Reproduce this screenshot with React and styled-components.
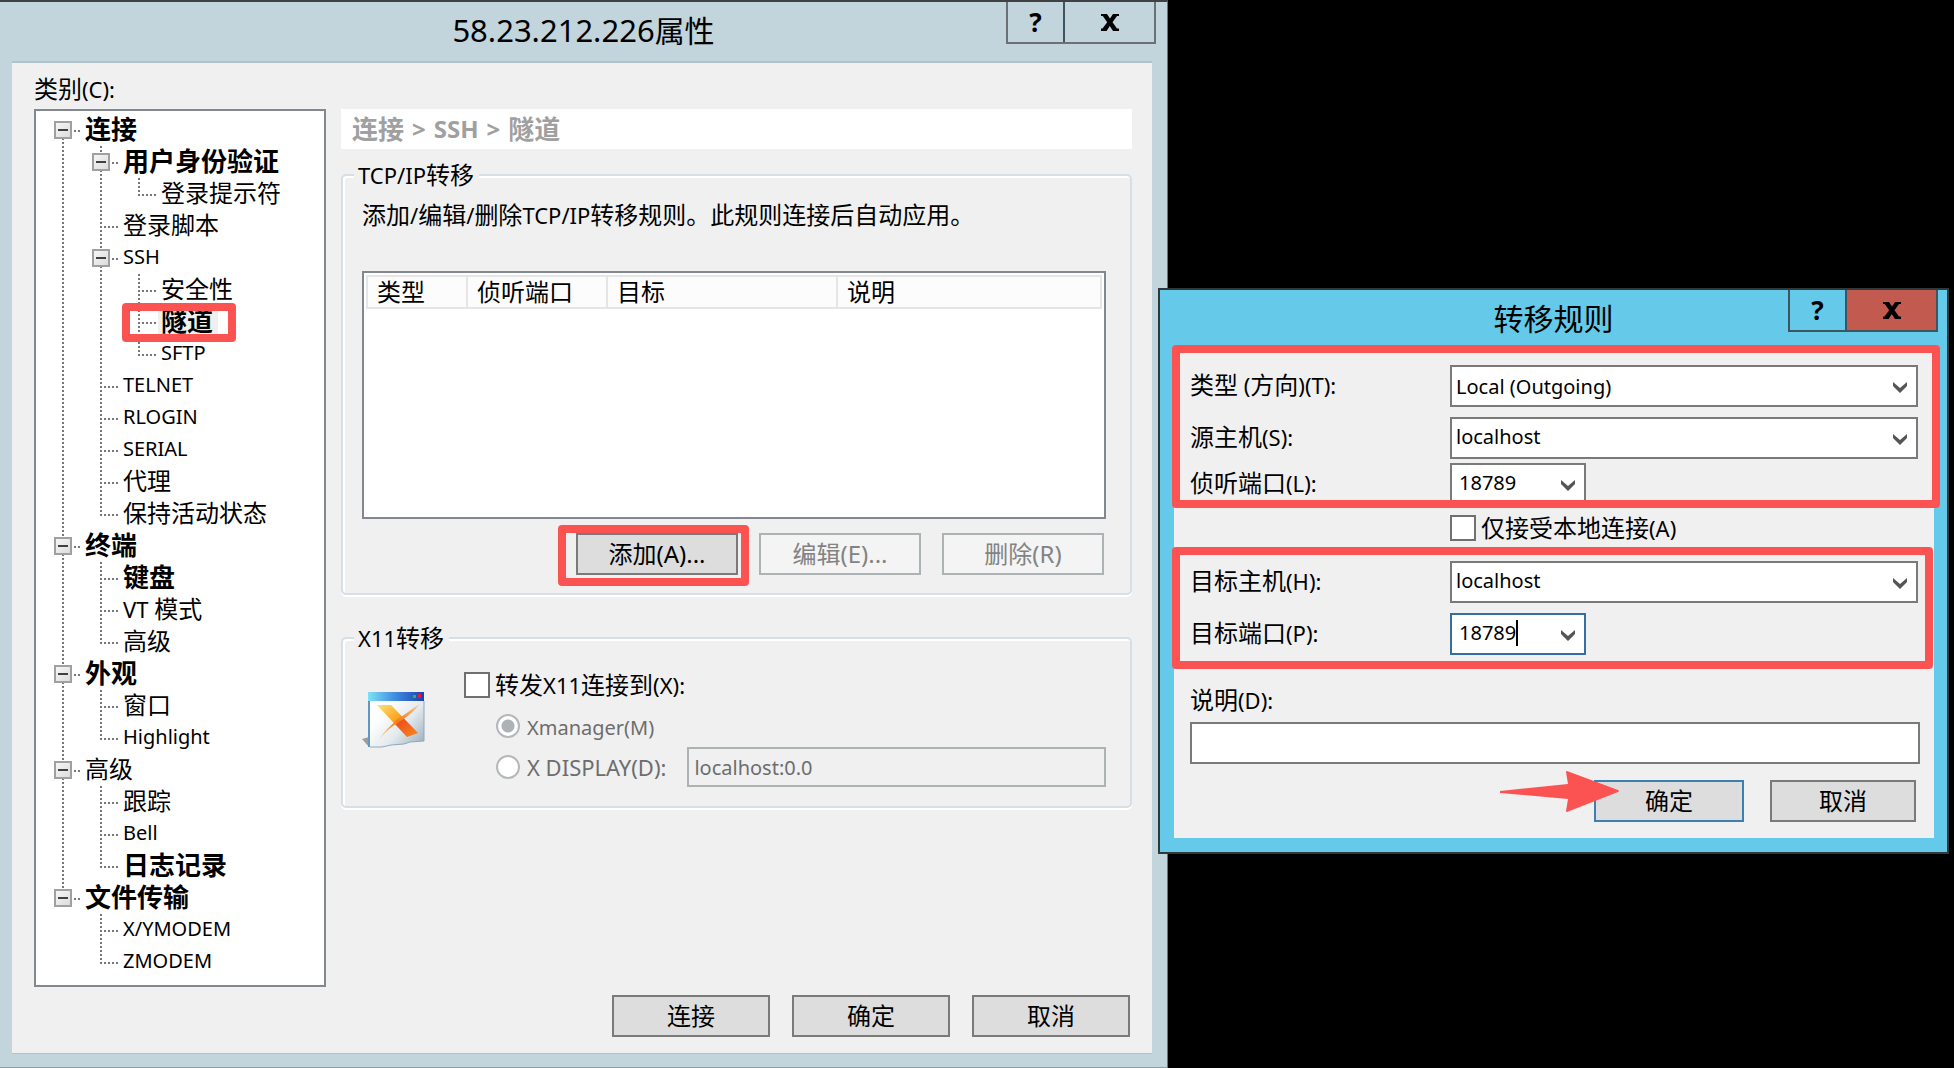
import React from "react";
import styled, { createGlobalStyle, css } from "styled-components";

const GlobalStyle = createGlobalStyle`
  * {
    box-sizing: border-box;
  }
  body {
    margin: 0;
    background: #000;
    color: #000;
    font-family: "Noto Sans", "Noto Sans CJK SC", sans-serif;
    font-size: 24px;
    line-height: 32px;
  }
  button,
  input,
  select {
    font-family: inherit;
    color: inherit;
    margin: 0;
    border-radius: 0;
  }
`;

const Desktop = styled.main`
  display: flex;
  align-items: flex-start;
  min-height: 100vh;
  padding-right: 5px;
`;

/* ---------- window frame ---------- */

const PropertiesWindow = styled.section`
  display: flex;
  flex-direction: column;
  flex: 1167 1 0;
  min-width: 0;
  min-height: 100vh;
  background: #c2d4dc;
  border-top: 2px solid #3f4144;
  border-right: 1px solid #66757c;
  border-bottom: 1px solid #8d9ea6;
`;

const RuleWindow = styled.section`
  flex: 787 1 0;
  min-width: 0;
  margin: 288px 0 0 -10px;
  z-index: 1;
  background: #65c9ea;
  border: 2px solid #30383c;
`;

const TitleBar = styled.header`
  display: grid;
  grid-template-columns: 1fr auto 1fr;
  align-items: center;
  height: 58px;
`;

const Title = styled.h1`
  grid-column: 2;
  margin: 0;
  font-size: 30px;
  font-weight: 400;
`;

const TitleButtons = styled.div`
  display: flex;
  justify-self: end;
  align-self: start;
  margin-right: ${(p) => p.$right}px;
  border: 2px solid ${(p) => p.$line};
  border-top: none;
`;

const TitleButton = styled.button`
  display: flex;
  align-items: center;
  justify-content: center;
  width: ${(p) => (p.$wide ? 91 : 55)}px;
  height: 40px;
  padding: 0;
  border: none;
  background: ${(p) => p.$bg || "transparent"};
  font-size: 26px;
  font-weight: 700;

  & + & {
    border-left: 2px solid ${(p) => p.$line};
  }
`;

const Client = styled.div`
  display: flex;
  flex-direction: column;
  flex: 1;
  margin: 1px 15px 13px 12px;
  padding: 10px 20px 16px 22px;
  background: #f0f0f0;
  border-top: 2px solid #b3c1c8;
  border-bottom: 1px solid #b3c1c8;
`;

const RuleClient = styled.form`
  display: flex;
  flex-direction: column;
  margin: 1px 13px 14px 14px;
  padding: 16px 14px 16px 16px;
  background: #f0f0f0;
`;

/* ---------- shared controls ---------- */

const Latin = styled.span`
  font-size: ${(p) => p.$size}px;
  line-height: 1;
`;

const Button = styled.button`
  width: ${(p) => p.$width}px;
  height: 42px;
  padding: 0;
  border: 2px solid ${(p) => (p.$primary ? "#3c7fb1" : "#7a7a7a")};
  background: #dddddd;
  font-size: 24px;
  line-height: 32px;

  &:disabled {
    border-color: #adb2b5;
    background: #f4f4f4;
    color: #838383;
  }
`;

const ButtonRow = styled.div`
  display: flex;
  justify-content: flex-end;
  gap: ${(p) => p.$gap}px;
  margin-top: ${(p) => p.$top}px;
  padding-right: ${(p) => p.$right}px;
`;

const frame = css`
  position: relative;

  &::after {
    content: "";
    position: absolute;
    inset: ${(p) => p.$inset};
    border: 8px solid #fb5352;
    border-radius: 4px;
    pointer-events: none;
    z-index: 1;
  }
`;

const Framed = styled.div`
  ${frame}
`;

const CheckLabel = styled.label`
  display: flex;
  align-items: center;
  gap: 5px;
  height: ${(p) => p.$height}px;
  white-space: nowrap;
`;

const CheckBox = styled.input`
  appearance: none;
  width: 26px;
  height: 26px;
  border: 2px solid #707070;
  background: #fff;
`;

const TextBox = styled.input`
  flex: 1 1 auto;
  min-width: 0;
  width: 100%;
  height: ${(p) => p.$height}px;
  padding: 0 5px;
  border: 2px solid #7a7a7a;
  background: #fff;
  font-size: 20px;

  &:disabled {
    border-color: #adb2b5;
    background: #f0f0f0;
    color: #6d6d6d;
  }
`;

/* ---------- category tree ---------- */

const TreeLabel = styled.div`
  margin-bottom: 4px;
`;

const Body = styled.div`
  display: flex;
  align-items: stretch;
  gap: 15px;
`;

const TreeBox = styled.ul`
  flex: none;
  width: 292px;
  margin: 0;
  padding: 3px 0 7px 8px;
  border: 2px solid #828790;
  background: #fff;
  list-style: none;
`;

const TreeRow = styled.li`
  display: flex;
  height: 32px;
`;

const dotsV = "repeating-linear-gradient(#777 0 2px, #fff 2px 4px)";
const dotsH = "repeating-linear-gradient(90deg, #777 0 2px, #fff 2px 4px)";

const Guide = styled.span`
  display: flex;
  align-items: center;
  justify-content: center;
  flex: none;
  width: 38px;
  background-repeat: no-repeat;
  background-image: ${(p) =>
    [p.$up && dotsV, p.$down && dotsV, p.$across && dotsH]
      .filter(Boolean)
      .join(", ") || "none"};
  background-size: ${(p) =>
    [p.$up && "2px 16px", p.$down && "2px 16px", p.$across && "18px 2px"]
      .filter(Boolean)
      .join(", ") || "auto"};
  background-position: ${(p) =>
    [p.$up && "18px 0", p.$down && "18px 16px", p.$across && "18px 16px"]
      .filter(Boolean)
      .join(", ") || "0 0"};
`;

const Expander = styled.button`
  display: flex;
  align-items: center;
  justify-content: center;
  width: 18px;
  height: 18px;
  padding: 0;
  border: 2px solid #a0a0a0;
  background: linear-gradient(135deg, #f6f6f6, #dcdcdc);

  &::before {
    content: "";
    width: 10px;
    height: 2px;
    background: #404040;
  }
`;

const NodeText = styled.span`
  padding: 0 5px 0 3px;
  white-space: nowrap;
  font-size: ${(p) => (p.$bold ? 26 : p.$ascii ? 20 : 24)}px;
  font-weight: ${(p) => (p.$bold ? 700 : 400)};
  line-height: 30px;
  background: ${(p) => (p.$inset ? "#f0f0f0" : "transparent")};
  ${(p) => p.$inset && frame}
`;

/* ---------- tunneling panel ---------- */

const Panel = styled.div`
  flex: 1;
  min-width: 0;
`;

const Breadcrumb = styled.nav`
  display: flex;
  align-items: center;
  gap: 8px;
  height: 40px;
  margin-bottom: 10px;
  padding-left: 11px;
  background: #fff;
  color: #a0a0a0;
  font-size: 26px;
  font-weight: 700;
`;

const Group = styled.fieldset`
  min-width: 0;
  margin: 0 0 27px;
  padding: 0 11px;
  border: 2px solid #d5dfe5;
  border-radius: 5px;
  box-shadow: inset 2px 2px 0 #fff, 0 2px 0 #fff;
`;

const Legend = styled.legend`
  padding: 0 5px 0 4px;
  background: #f0f0f0;
`;

const ForwardBody = styled.div`
  padding: 8px 13px 18px 8px;
`;

const Description = styled.p`
  margin: 0 0 40px;
`;

const TableBox = styled.div`
  height: 248px;
  padding: 2px;
  border: 2px solid #828790;
  background: #fff;
`;

const RuleTable = styled.table`
  width: 100%;
  table-layout: fixed;
  border-collapse: collapse;
`;

const HeadCell = styled.th`
  width: ${(p) => p.$width};
  height: 32px;
  padding: 0 0 0 9px;
  border: 2px solid #e5e5e5;
  background: #fcfcfc;
  font-weight: 400;
  line-height: 30px;
  text-align: left;
`;

const X11Body = styled.div`
  display: flex;
  gap: 39px;
  padding: 15px 13px 19px 8px;
`;

const X11Options = styled.div`
  flex: 1;
  min-width: 0;
`;

const RadioRow = styled.div`
  display: flex;
  align-items: center;
  gap: 7px;
  height: ${(p) => p.$height}px;
  margin-top: ${(p) => p.$top}px;
  padding-left: 32px;
  color: #6d6d6d;
  white-space: nowrap;
`;

const Radio = styled.input`
  appearance: none;
  flex: none;
  width: 24px;
  height: 24px;
  border: 2px solid #b4b8ba;
  && {
    border-radius: 50%;
  }
  background: #fff;

  &:checked {
    background: radial-gradient(circle, #adb2b5 0 6px, #fff 7px);
  }
`;

const DisplayLabel = styled.label`
  margin-right: 14px;
`;

/* ---------- forwarding rule form ---------- */

const FormRow = styled.div`
  display: grid;
  grid-template-columns: 260px 1fr;
  align-items: center;
  margin-top: ${(p) => p.$top || 0}px;
  padding-right: 2px;
`;

const FieldLabel = styled.label`
  padding-bottom: 2px;
`;

const ComboBox = styled.div`
  display: grid;
  grid-template-columns: 1fr 32px;
  align-items: center;
  width: ${(p) => (p.$short ? "136px" : "100%")};
  height: 42px;
  border: 2px solid ${(p) => (p.$active ? "#356f9f" : "#7a7a7a")};
  background: #fff;
`;

const ComboSelect = styled.select`
  grid-area: 1 / 1 / 2 / 3;
  appearance: none;
  height: 38px;
  padding: 0 4px;
  border: none;
  background: transparent;
  font-size: 20px;
`;

const ComboField = styled.div`
  display: flex;
  align-items: center;
  grid-area: 1 / 1;
  padding: 0 0 3px ${(p) => (p.$short ? 7 : 4)}px;
`;

const ComboInput = styled.input`
  field-sizing: content;
  padding: 0;
  border: none;
  outline: none;
  background: transparent;
  font-size: 20px;
`;

const Caret = styled.span`
  width: 2px;
  height: 26px;
  background: #000;
`;

const Chevron = styled.svg`
  grid-area: 1 / 2;
  justify-self: center;
  margin-top: 2px;
  pointer-events: none;
`;

const CheckRow = styled.div`
  margin: 10px 0 20px 260px;
`;

const NoteLabel = styled.label`
  margin: 29px 0 6px;
`;

const Pointed = styled.span`
  position: relative;
`;

const Arrow = styled.svg`
  position: absolute;
  left: -94px;
  top: -9px;
  pointer-events: none;
`;

const isAscii = (text) => /^[\x20-\x7e]+$/.test(text);

// The ASCII runs are set smaller than the Chinese text around them.
const Mixed = ({ text, latin = 22 }) =>
  text
    .split(/([\x20-\x7e]+)/)
    .filter(Boolean)
    .map((part, i) =>
      isAscii(part) ? (
        <Latin key={i} $size={latin}>
          {part}
        </Latin>
      ) : (
        part
      )
    );

const CloseIcon = () => (
  <svg width="18" height="17" viewBox="0 0 18 17" aria-hidden="true">
    <path
      d="M0 0h6l3 4.500 3-4.500h6v2h-2l-4.500 6.300 4.500 6.200h2v2.500h-6l-3.200-5-3.200 5H0V14.500h1.500L6.200 8.300 1.800 2H0z"
      fill="#000"
    />
  </svg>
);

const XIcon = () => (
  <svg width="64" height="58" viewBox="0 0 64 58" aria-hidden="true">
    <defs>
      <linearGradient id="bar" x1="0" x2="1">
        <stop offset="0" stopColor="#7fe0f8" />
        <stop offset="0.500" stopColor="#3d8ade" />
        <stop offset="1" stopColor="#1f3fae" />
      </linearGradient>
      <linearGradient id="page" x1="0.300" y1="0.300" x2="1" y2="0.900">
        <stop offset="0" stopColor="#ffffff" />
        <stop offset="0.500" stopColor="#e3e9ed" />
        <stop offset="1" stopColor="#9fb2bf" />
      </linearGradient>
      <linearGradient id="stroke" x1="0" y1="0" x2="1" y2="1">
        <stop offset="0" stopColor="#ffe07a" />
        <stop offset="0.450" stopColor="#fba51c" />
        <stop offset="0.550" stopColor="#f0521a" />
        <stop offset="1" stopColor="#f98a1c" />
      </linearGradient>
      <linearGradient id="slash" x1="1" y1="0" x2="0" y2="1">
        <stop offset="0" stopColor="#fbc98a" />
        <stop offset="0.500" stopColor="#f47a1a" />
        <stop offset="1" stopColor="#fbd9a0" />
      </linearGradient>
    </defs>
    <path d="M0 48l7-2v10z" fill="#9a9da0" />
    <path d="M6 1h56v49l-14 1-6 2-13 1-9 2-13 1z" fill="url(#page)" />
    <path d="M6 1h2v55H6z" fill="#5f96c4" />
    <path d="M62 10v40l-14 1-6 2-13 1-9 2-12 0" fill="none" stroke="#8ea9ba" />
    <path d="M6 1h56v9H6z" fill="url(#bar)" />
    <path d="M51 4h3v3h-3z" fill="#1fbf4f" />
    <path d="M56 3h3v4h-3z" fill="#e0203a" />
    <path d="M15 14h14l27 28-11 4z" fill="url(#stroke)" />
    <path d="M58 13C40 25 27 33 16 50c7-9 13-14 21-19s14-10 21-18z" fill="url(#slash)" />
  </svg>
);

const WindowTitle = ({ title, line, closeBg, right }) => (
  <TitleBar>
    <Title>
      <Mixed text={title} latin={31} />
    </Title>
    <TitleButtons $line={line} $right={right}>
      <TitleButton type="button" $line={line}>
        ?
      </TitleButton>
      <TitleButton type="button" $wide $line={line} $bg={closeBg} aria-label="Close">
        <CloseIcon />
      </TitleButton>
    </TitleButtons>
  </TitleBar>
);

const tree = [
  {
    name: "连接",
    bold: true,
    children: [
      { name: "用户身份验证", bold: true, children: [{ name: "登录提示符" }] },
      { name: "登录脚本" },
      {
        name: "SSH",
        children: [
          { name: "安全性" },
          { name: "隧道", bold: true, selected: true },
          { name: "SFTP" },
        ],
      },
      { name: "TELNET" },
      { name: "RLOGIN" },
      { name: "SERIAL" },
      { name: "代理" },
      { name: "保持活动状态" },
    ],
  },
  {
    name: "终端",
    bold: true,
    children: [{ name: "键盘", bold: true }, { name: "VT 模式" }, { name: "高级" }],
  },
  {
    name: "外观",
    bold: true,
    children: [{ name: "窗口" }, { name: "Highlight" }],
  },
  {
    name: "高级",
    children: [{ name: "跟踪" }, { name: "Bell" }, { name: "日志记录", bold: true }],
  },
  {
    name: "文件传输",
    bold: true,
    children: [{ name: "X/YMODEM" }, { name: "ZMODEM" }],
  },
];

// Flattens the tree; "lines" tells for each ancestor whether its line goes on.
const flatten = (nodes, lines = []) =>
  nodes.flatMap((node, i) => {
    const last = i === nodes.length - 1;
    const first = i === 0 && lines.length === 0;
    return [
      { ...node, lines, last, first },
      ...flatten(node.children || [], [...lines, !last]),
    ];
  });

const CategoryTree = () => (
  <TreeBox aria-labelledby="category">
    {flatten(tree).map((node, i) => (
      <TreeRow key={i}>
        {node.lines.map((on, j) => (
          <Guide key={j} $up={on} $down={on} />
        ))}
        <Guide $up={!node.first} $down={!node.last} $across>
          {node.children && <Expander type="button" aria-label={node.name} />}
        </Guide>
        <NodeText
          $bold={node.bold}
          $ascii={isAscii(node.name)}
          $inset={node.selected && "-3px -18px -4px -36px"}
        >
          {isAscii(node.name) ? node.name : <Mixed text={node.name} />}
        </NodeText>
      </TreeRow>
    ))}
  </TreeBox>
);

const Combo = ({ id, value, options, short, active }) => (
  <ComboBox $short={short} $active={active}>
    {options ? (
      <ComboSelect id={id} defaultValue={value}>
        {options.map((o) => (
          <option key={o}>{o}</option>
        ))}
      </ComboSelect>
    ) : (
      <ComboField $short={short}>
        <ComboInput id={id} defaultValue={value} />
        {active && <Caret />}
      </ComboField>
    )}
    <Chevron width="16" height="13" viewBox="0 0 16 13" aria-hidden="true">
      <path d="M1 1v4l7 7 7-7V1L8 7z" fill="#555" />
    </Chevron>
  </ComboBox>
);

const Field = ({ label, top, ...combo }) => (
  <FormRow $top={top}>
    <FieldLabel htmlFor={combo.id}>
      <Mixed text={label} />
    </FieldLabel>
    <Combo {...combo} />
  </FormRow>
);

const Properties = () => (
  <PropertiesWindow>
    <WindowTitle title="58.23.212.226属性" line="#6b7076" right={11} />
    <Client>
      <TreeLabel id="category">
        <Mixed text="类别(C):" />
      </TreeLabel>
      <Body>
        <CategoryTree />
        <Panel>
          <Breadcrumb>
            <span>连接</span>
            <Latin $size={24}>&gt;</Latin>
            <Latin $size={24}>SSH</Latin>
            <Latin $size={24}>&gt;</Latin>
            <span>隧道</span>
          </Breadcrumb>
          <Group>
            <Legend>
              <Mixed text="TCP/IP转移" />
            </Legend>
            <ForwardBody>
              <Description>
                <Mixed text="添加/编辑/删除TCP/IP转移规则。此规则连接后自动应用。" />
              </Description>
              <TableBox>
                <RuleTable>
                  <thead>
                    <tr>
                      <HeadCell $width="100px">类型</HeadCell>
                      <HeadCell $width="140px">侦听端口</HeadCell>
                      <HeadCell $width="230px">目标</HeadCell>
                      <HeadCell $width="auto">说明</HeadCell>
                    </tr>
                  </thead>
                </RuleTable>
              </TableBox>
              <ButtonRow $gap={21} $top={14} $right={2}>
                <Framed $inset="-8px -11px -11px -18px">
                  <Button type="button" $width={162}>
                    <Mixed text="添加(A)..." latin={24} />
                  </Button>
                </Framed>
                <Button type="button" $width={162} disabled>
                  <Mixed text="编辑(E)..." latin={24} />
                </Button>
                <Button type="button" $width={162} disabled>
                  <Mixed text="删除(R)" latin={24} />
                </Button>
              </ButtonRow>
            </ForwardBody>
          </Group>
          <Group>
            <Legend>
              <Mixed text="X11转移" />
            </Legend>
            <X11Body>
              <svg width="63" height="80" viewBox="0 0 63 80" aria-hidden="true">
                <g transform="translate(0 22)">
                  <XIcon />
                </g>
              </svg>
              <X11Options>
                <CheckLabel $height={32}>
                  <CheckBox type="checkbox" />
                  <span>
                    <Mixed text="转发X11连接到(X):" />
                  </span>
                </CheckLabel>
                <RadioRow $height={32} $top={9}>
                  <Radio type="radio" name="x11" id="xmanager" defaultChecked disabled />
                  <label htmlFor="xmanager">
                    <Mixed text="Xmanager(M)" latin={20} />
                  </label>
                </RadioRow>
                <RadioRow $height={40} $top={5}>
                  <Radio type="radio" name="x11" id="xdisplay" disabled />
                  <DisplayLabel htmlFor="xdisplay">
                    <Mixed text="X DISPLAY(D):" />
                  </DisplayLabel>
                  <TextBox
                    aria-label="X DISPLAY"
                    defaultValue="localhost:0.0"
                    $height={40}
                    disabled
                  />
                </RadioRow>
              </X11Options>
            </X11Body>
          </Group>
        </Panel>
      </Body>
      <ButtonRow $gap={22} $top={8} $right={2}>
        <Button type="button" $width={158}>连接</Button>
        <Button type="button" $width={158}>确定</Button>
        <Button type="button" $width={158}>取消</Button>
      </ButtonRow>
    </Client>
  </PropertiesWindow>
);

const ForwardingRule = () => (
  <RuleWindow>
    <WindowTitle title="转移规则" line="#3d5560" closeBg="#c35a50" right={9} />
    <RuleClient>
      <Framed $inset="-20px -20px -3px -18px">
        <Field
          id="type"
          label="类型 (方向)(T):"
          value="Local (Outgoing)"
          options={["Local (Outgoing)", "Remote (Incoming)", "Dynamic (SOCKS4/5)"]}
        />
        <Field id="source" label="源主机(S):" value="localhost" top={10} />
        <Field id="listen" label="侦听端口(L):" value="18789" short top={4} />
      </Framed>
      <CheckRow>
        <CheckLabel $height={26}>
          <CheckBox type="checkbox" />
          <span>
            <Mixed text="仅接受本地连接(A)" />
          </span>
        </CheckLabel>
      </CheckRow>
      <Framed $inset="-14px -13px -14px -18px">
        <Field id="host" label="目标主机(H):" value="localhost" />
        <Field id="port" label="目标端口(P):" value="18789" short active top={10} />
      </Framed>
      <NoteLabel htmlFor="note">
        <Mixed text="说明(D):" />
      </NoteLabel>
      <TextBox id="note" $height={42} />
      <ButtonRow $gap={26} $top={16} $right={4}>
        <Pointed>
          <Button type="button" $width={150} $primary>确定</Button>
          <Arrow width="120" height="42" viewBox="0 0 120 42" aria-hidden="true">
            <path
              d="M0 20l68-7-2-12q0-1 1-1l51 19q2 1 0 2L67 41q-1 0-1-1l2-12-68-6z"
              fill="#fb5352"
            />
          </Arrow>
        </Pointed>
        <Button type="button" $width={146}>取消</Button>
      </ButtonRow>
    </RuleClient>
  </RuleWindow>
);

const App = () => (
  <>
    <GlobalStyle />
    <Desktop>
      <Properties />
      <ForwardingRule />
    </Desktop>
  </>
);

export default App;
